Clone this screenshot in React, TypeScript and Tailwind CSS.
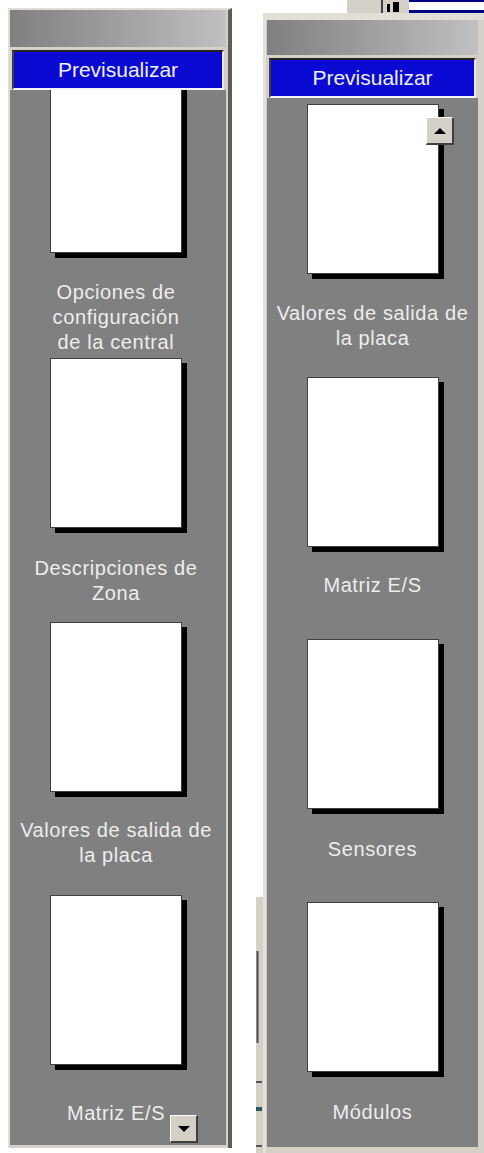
import React from 'react';

type Item = { label: string[]; thumbMt: number; labelMt: number };

const leftItems: Item[] = [
  { label: ['Opciones de', 'configuración', 'de la central'], thumbMt: -7, labelMt: 27 },
  { label: ['Descripciones de', 'Zona'], thumbMt: 3, labelMt: 28 },
  { label: ['Valores de salida de', 'la placa'], thumbMt: 16, labelMt: 26 },
  { label: ['Matriz E/S'], thumbMt: 27, labelMt: 36 },
];

const rightItems: Item[] = [
  { label: ['Valores de salida de', 'la placa'], thumbMt: 6, labelMt: 27 },
  { label: ['Matriz E/S'], thumbMt: 26, labelMt: 26 },
  { label: ['Sensores'], thumbMt: 41, labelMt: 28 },
  { label: ['Módulos'], thumbMt: 40, labelMt: 28 },
];

function Thumb({ item }: { item: Item }) {
  return (
    <div className="flex flex-col items-center" style={{ marginTop: item.thumbMt }}>
      <div className="w-[132px] h-[170px] bg-white border border-[#404040] shadow-[5px_5px_0_#000] shrink-0" />
      <div className="text-center text-[20px] leading-[25px] tracking-[0.6px] text-[#ededed] whitespace-nowrap" style={{ marginTop: item.labelMt }}>
        {item.label.map((l) => (
          <div key={l}>{l}</div>
        ))}
      </div>
    </div>
  );
}

function ScrollButton({ down }: { down?: boolean }) {
  return (
    <div className="w-[28px] h-[28px] bg-[#d4d0c8] border-t border-l border-white border-r-2 border-b-2 border-r-[#404040] border-b-[#404040] flex items-center justify-center">
      <div
        className={
          down
            ? 'w-0 h-0 border-l-[6px] border-r-[6px] border-t-[6px] border-l-transparent border-r-transparent border-t-black'
            : 'w-0 h-0 border-l-[6px] border-r-[6px] border-b-[6px] border-l-transparent border-r-transparent border-b-black'
        }
      />
    </div>
  );
}

function Header() {
  return (
    <div className="mx-[2px] border-t-2 border-l-2 border-t-[#202020] border-l-[#404040] border-b-2 border-r-2 border-b-[#f4f4f4] border-r-[#e8e8e8] bg-[#0a0ad2] h-[40px] flex items-center justify-center text-[21px] text-[#eef0ff]">
      Previsualizar
    </div>
  );
}

export default function App() {
  return (
    <div className="w-[484px] h-[1153px] bg-white flex overflow-hidden font-['Liberation_Sans',Arial,sans-serif]">
      {/* left window */}
      <div className="ml-[8px] mt-[8px] w-[224px] h-[1140px] bg-[#d4d0c8] border-t-2 border-l-2 border-[#e0ddd6] border-r-[4px] border-r-[#5c5c5c] pr-[2px] flex flex-col">
        <div className="h-[37px] shrink-0 bg-gradient-to-r from-[#808080] to-[#c0c0c0]" />
        <div className="h-[3px] shrink-0" />
        <Header />
        <div className="relative h-[1055px] bg-[#808080] overflow-hidden">
          <div className="flex flex-col pr-[4px]">
            {leftItems.map((it) => (
              <Thumb key={it.label.join()} item={it} />
            ))}
          </div>
          <div className="absolute left-[160px] top-[1025px]">
            <ScrollButton down />
          </div>
        </div>
      </div>

      {/* gap with part of the window behind */}
      <div className="w-[31px] h-full flex flex-col items-end">
        <div className="mt-[897px] w-[7px] flex-1 bg-[#d4d0c8] flex flex-col items-start">
          <div className="mt-[54px] w-[3px] h-[92px] bg-[#555] border-x border-[#888]" />
          <div className="mt-[38px] w-[6px] h-[2px] bg-[#555]" />
          <div className="mt-[24px] w-[6px] h-[4px] bg-[#1f5f5f]" />
          <div className="mt-[34px] w-[6px] h-[2px] bg-[#555]" />
        </div>
      </div>

      {/* right window */}
      <div className="w-[221px] flex flex-col">
        <div className="h-[13px] flex shrink-0">
          <div className="ml-[84px] w-[36px] h-full bg-[#d4d0c8] border-r-2 border-[#404040]" />
          <div className="w-[26px] h-full bg-[#d4d0c8] flex gap-[3px] items-end pb-[1px] pl-[4px]">
            <div className="w-[3px] h-[8px] bg-black" />
            <div className="w-[6px] h-[10px] bg-black" />
          </div>
          <div className="flex-1 h-full bg-white border-b-[3px] border-t-2 border-[#000080]" />
        </div>
        <div className="flex-1 bg-[#d4d0c8] border-t-[7px] border-t-[#e2dfd8] border-l-[3px] border-l-[#e4e1da] pl-[1px] pr-[6px] flex flex-col">
          <div className="h-[35px] shrink-0 bg-gradient-to-r from-[#808080] to-[#c0c0c0]" />
          <div className="h-[3px] shrink-0" />
          <Header />
          <div className="relative h-[1049px] bg-[#808080] overflow-hidden">
            <div className="flex flex-col">
              {rightItems.map((it) => (
                <Thumb key={it.label.join()} item={it} />
              ))}
            </div>
            <div className="absolute left-[159px] top-[19px]">
              <ScrollButton />
            </div>
          </div>
        </div>
      </div>
    </div>
  );
}
